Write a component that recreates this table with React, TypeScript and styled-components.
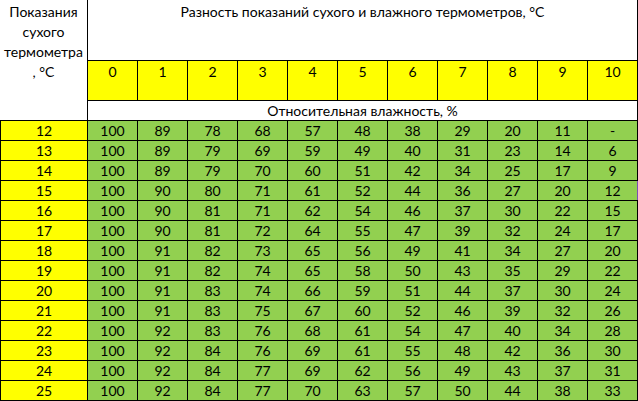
import React from "react";
import styled, { createGlobalStyle } from "styled-components";

const Global = createGlobalStyle`
  html, body { margin: 0; padding: 0; background: #ffffff; }
  body { font-family: "Lato", "Open Sans", "Liberation Sans", sans-serif; }
`;

const rows: [number, string[]][] = [
  [12, ["100", "89", "78", "68", "57", "48", "38", "29", "20", "11", "-"]],
  [13, ["100", "89", "79", "69", "59", "49", "40", "31", "23", "14", "6"]],
  [14, ["100", "89", "79", "70", "60", "51", "42", "34", "25", "17", "9"]],
  [15, ["100", "90", "80", "71", "61", "52", "44", "36", "27", "20", "12"]],
  [16, ["100", "90", "81", "71", "62", "54", "46", "37", "30", "22", "15"]],
  [17, ["100", "90", "81", "72", "64", "55", "47", "39", "32", "24", "17"]],
  [18, ["100", "91", "82", "73", "65", "56", "49", "41", "34", "27", "20"]],
  [19, ["100", "91", "82", "74", "65", "58", "50", "43", "35", "29", "22"]],
  [20, ["100", "91", "83", "74", "66", "59", "51", "44", "37", "30", "24"]],
  [21, ["100", "91", "83", "75", "67", "60", "52", "46", "39", "32", "26"]],
  [22, ["100", "92", "83", "76", "68", "61", "54", "47", "40", "34", "28"]],
  [23, ["100", "92", "84", "76", "69", "61", "55", "48", "42", "36", "30"]],
  [24, ["100", "92", "84", "77", "69", "62", "56", "49", "43", "37", "31"]],
  [25, ["100", "92", "84", "77", "70", "63", "57", "50", "44", "38", "33"]],
];

const Table = styled.div`
  position: relative;
  display: grid;
  grid-template-columns: 88px repeat(11, 50px);
  grid-template-rows: 61px 40px 20px repeat(14, 20px);
  width: 638px;
  font-size: 14px;
  color: #000;
`;

type Tone = "white" | "yellow" | "green";
const tones: Record<Tone, string> = {
  white: "#ffffff",
  yellow: "#ffff00",
  green: "#92d050",
};

const Cell = styled.div<{ $tone: Tone; $left?: boolean; $top?: boolean }>`
  box-sizing: border-box;
  background: ${(p) => tones[p.$tone]};
  border-right: 1px solid #000;
  border-bottom: 1px solid #000;
  border-left: ${(p) => (p.$left ? "1px solid #000" : "none")};
  display: flex;
  justify-content: center;
  align-items: ${(p) => (p.$top ? "flex-start" : "center")};
  text-align: center;
  line-height: 20px;
  white-space: nowrap;
`;

const Corner = styled(Cell)`
  grid-row: 1 / span 3;
  grid-column: 1;
  flex-direction: column;
  justify-content: flex-start;
  align-items: center;
  padding-top: 2px;
  border-left: none;
`;

const Title = styled(Cell)`
  grid-column: 2 / span 11;
  padding-top: 2px;
`;

const SubTitle = styled(Cell)`
  grid-column: 2 / span 11;
`;

const Head = styled(Cell)`
  padding-top: 1px;
`;

const Marker = styled.span`
  position: absolute;
  right: 0;
  top: 181px;
  width: 1px;
  height: 19px;
  background: #7a4fb0;
`;

export default function App() {
  return (
    <>
      <Global />
      <Table>
        <Corner $tone="white">
          <span>Показания</span>
          <span>сухого</span>
          <span>термометра</span>
          <span>, °С</span>
        </Corner>
        <Title $tone="white" $top>
          Разность показаний сухого и влажного термометров, °С
        </Title>
        {Array.from({ length: 11 }, (_, i) => (
          <Head key={i} $tone="yellow" $top>
            {i}
          </Head>
        ))}
        <SubTitle $tone="white">Относительная влажность, %</SubTitle>
        {rows.map(([t, vals]) => (
          <React.Fragment key={t}>
            <Cell $tone="yellow" $left>
              {t}
            </Cell>
            {vals.map((v, j) => (
              <Cell key={j} $tone="green">
                {v}
              </Cell>
            ))}
          </React.Fragment>
        ))}
        <Marker />
      </Table>
    </>
  );
}
